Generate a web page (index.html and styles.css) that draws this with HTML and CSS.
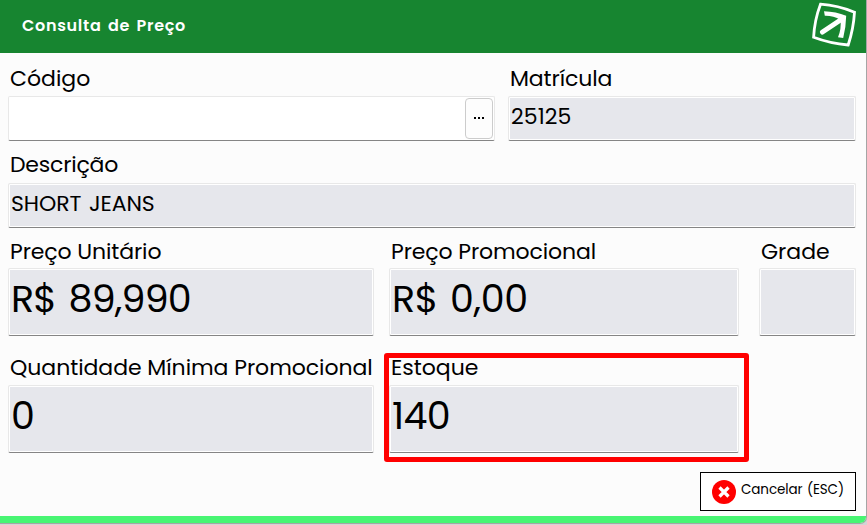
FILE: index.html
```html
<!DOCTYPE html>
<html lang="pt-br">
<head>
	<meta charset="UTF-8">
	<title>Consulta de Preço</title>
	<link rel="stylesheet" href="styles.css">
</head>
<body>
	<div class="janela">
		<header class="topo">
			<h1 class="titulo">Consulta de Preço</h1>
			<svg class="logo" width="46" height="46" viewBox="0 0 46 46" fill="none" stroke="#fff">
				<path d="M9.500 3.200Q27 4.500 43.500 11.200Q42.500 28 37.200 44Q19 42.500 2.600 36.300Q3.500 19 9.500 3.200Z" stroke-width="2.800"/>
				<path d="M11.500 31L31 18" stroke-width="5" stroke-linecap="round"/>
				<path d="M13 10.200Q25 10.500 35.200 14.800Q35 26 32.200 37L27 36.200Q30.500 28 29.500 19Q22 14.500 13.800 14.800Z" fill="#fff" stroke="none"/>
			</svg>
		</header>

		<main class="conteudo">
			<div class="linha linha1">
				<div class="campo">
					<label class="rotulo codigo">Código</label>
					<div class="caixa branca"><button class="busca"><i></i><i></i><i></i></button></div>
				</div>
				<div class="campo">
					<label class="rotulo matricula">Matrícula</label>
					<div class="caixa">25125</div>
				</div>
			</div>

			<div class="linha linha2">
				<div class="campo">
					<label class="rotulo descricao">Descrição</label>
					<div class="caixa produto">SHORT JEANS</div>
				</div>
			</div>

			<div class="linha linha3">
				<div class="campo">
					<label class="rotulo unitario">Preço Unitário</label>
					<div class="caixa grande preco">R$ 89,990</div>
				</div>
				<div class="campo">
					<label class="rotulo promocional">Preço Promocional</label>
					<div class="caixa grande promo">R$ 0,00</div>
				</div>
				<div class="campo">
					<label class="rotulo">Grade</label>
					<div class="caixa grande"></div>
				</div>
			</div>

			<div class="linha linha4">
				<div class="campo">
					<label class="rotulo quantidade">Quantidade Mínima Promocional</label>
					<div class="caixa grande">0</div>
				</div>
				<div class="campo destaque">
					<label class="rotulo">Estoque</label>
					<div class="caixa grande total">140</div>
				</div>
			</div>

			<div class="acoes">
				<button class="cancelar">
					<svg width="24" height="24" viewBox="0 0 24 24">
						<circle cx="12" cy="12" r="12" fill="#f00"/>
						<path d="M7.500 7.500L16.500 16.500M16.500 7.500L7.500 16.500" stroke="#fff" stroke-width="3.200"/>
					</svg>
					<span>Cancelar (ESC)</span>
				</button>
			</div>
		</main>
		<footer class="rodape"></footer>
	</div>
</body>
</html>
```
FILE: styles.css
```css
body,h1{
	margin: 0;
	padding: 0;
}
*,*::after{
	box-sizing: border-box;
}
body{
	background: #d4d4d4;
	font-family: Poppins, Inter, "Open Sans", sans-serif;
	color: #000;
}
button{
	font: inherit;
	color: inherit;
	padding: 0;
}
.janela{
	width: 867px;
	height: 524px;
	display: flex;
	flex-direction: column;
	background: #fcfcfc;
	border-right: 1px solid #a5a5a5;
	border-bottom: 1px solid #a5a5a5;
	border-bottom-right-radius: 7px;
	overflow: hidden;
}
.topo{
	height: 53px;
	flex: none;
	display: flex;
	justify-content: space-between;
	padding: 0 9px 0 22px;
	background: #178530;
	color: #fff;
}
.titulo{
	font-size: 16px;
	line-height: 51px;
	font-weight: 600;
	word-spacing: 2px;
	letter-spacing: 0.7px;
}
.logo{
	margin-top: 1px;
}
.conteudo{
	flex: 1;
	padding: 10px 10px 0 8px;
}
.linha{
	display: grid;
}
.linha1{
	grid-template-columns: 487px 348px;
	column-gap: 13px;
}
.linha2{
	margin-top: 9px;
}
.linha3{
	grid-template-columns: 366px 350px 97px;
	column-gap: 15px;
	margin-top: 7px;
}
.linha3 .campo:last-child{
	margin-left: 5px;
	width: 97px;
}
.linha4{
	grid-template-columns: 366px 350px;
	column-gap: 15px;
	margin-top: 16px;
}
.rotulo{
	display: block;
	height: 33px;
	line-height: 31px;
	padding-left: 2px;
	font-size: 22px;
	white-space: nowrap;
}
.linha2 .rotulo{
	line-height: 29px;
}
.linha3 .rotulo{
	line-height: 33px;
}
.matricula,.unitario,.promocional{
	letter-spacing: -0.1px;
}
.descricao{
	letter-spacing: -0.2px;
}
.quantidade{
	letter-spacing: -0.05px;
}
.caixa{
	height: 45px;
	line-height: 39px;
	padding-left: 2px;
	font-size: 22px;
	letter-spacing: 0.1px;
	background: #e6e7ec;
	border: 1px solid #e8e8e8;
	border-bottom-color: #858585;
	border-radius: 2px;
	box-shadow: inset 0 0 0 1px #fff;
	white-space: nowrap;
}
.produto{
	letter-spacing: -0.1px;
	word-spacing: 2px;
}
.branca{
	display: flex;
	justify-content: flex-end;
	background: #fff;
	padding: 1px 0 0;
}
.busca{
	width: 28px;
	height: 41px;
	display: flex;
	justify-content: center;
	align-items: center;
	gap: 2px;
	margin-right: 1px;
	padding-bottom: 1px;
	background: #fdfdfd;
	border: 1px solid #ccc;
	border-radius: 4px;
}
.busca i{
	width: 2px;
	height: 2px;
	background: #000;
}
.grande{
	height: 68px;
	line-height: 60px;
	font-size: 38px;
	letter-spacing: 0;
}
.preco{
	letter-spacing: -0.8px;
	word-spacing: 3px;
}
.promo{
	letter-spacing: -0.3px;
	word-spacing: 2px;
}
.total{
	letter-spacing: -0.7px;
}
.destaque{
	position: relative;
}
.destaque::after{
	content: "";
	position: absolute;
	left: -5px;
	top: 1px;
	width: 365px;
	height: 109px;
	border: 5px solid #f00;
	border-radius: 3px;
}
.acoes{
	display: flex;
	justify-content: flex-end;
	margin-top: 19px;
}
.cancelar{
	width: 156px;
	height: 39px;
	display: flex;
	align-items: center;
	gap: 5px;
	padding-left: 11px;
	background: #fff;
	border: 1px solid #000;
	font-size: 13.5px;
	white-space: nowrap;
}
.cancelar span{
	margin-top: -4px;
	letter-spacing: -0.1px;
	word-spacing: 1px;
}
.rodape{
	height: 7px;
	flex: none;
	background: #48f573;
}
```
